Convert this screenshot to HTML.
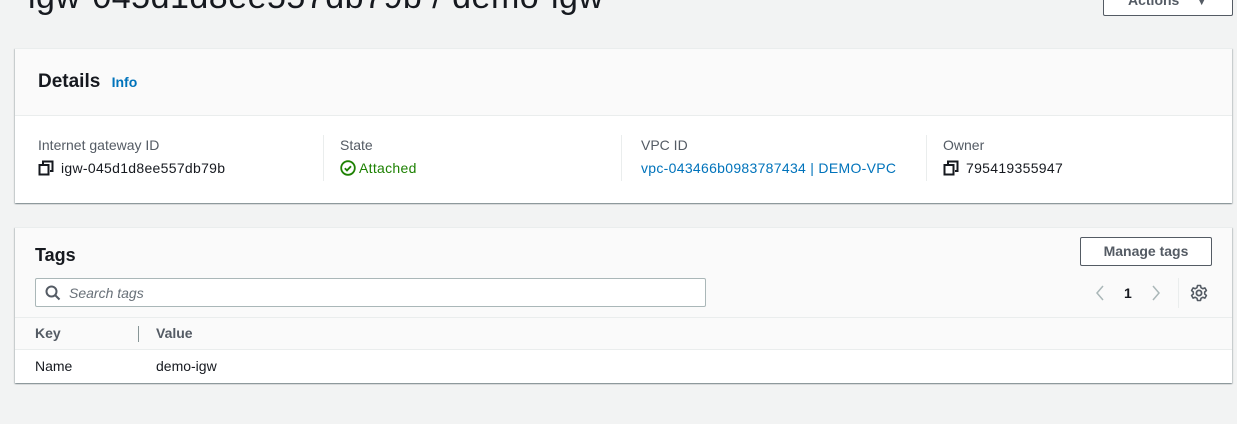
<!DOCTYPE html>
<html><head><style>
*{box-sizing:border-box;margin:0;padding:0}
body{width:1237px;height:424px;overflow:hidden;background:#f2f3f3;font-family:"Liberation Sans",sans-serif;color:#16191f;position:relative;font-size:14px}
.abs{position:absolute}
.card{position:absolute;left:15px;width:1217px;background:#fff;box-shadow:0 1px 1px 0 rgba(0,28,36,.3),1px 1px 1px 0 rgba(0,28,36,.15),-1px 1px 1px 0 rgba(0,28,36,.15);border-top:1px solid #eaeded}
.lbl{color:#545b64;font-size:14px}
.v{letter-spacing:.3px}
.sep{position:absolute;width:1px;background:#eaeded}
</style></head><body>
<div class="abs" style="left:28px;top:-22px;font-size:34px;color:#16191f;white-space:nowrap;letter-spacing:.5px">igw-045d1d8ee557db79b / demo-igw</div>
<div class="abs" style="left:1103px;top:-10px;width:130px;height:26px;border:1px solid #545b64;border-radius:2px;background:#fff;font-weight:bold;color:#545b64;font-size:14px;padding:0 0 0 24px;line-height:18px">Actions <span style="margin-left:14px;font-size:9px">▼</span></div>

<div class="card" style="top:48px;height:155px">
 <div style="height:67px;background:#fafafa;border-bottom:1px solid #eaeded;position:relative">
  <div class="abs" style="left:23px;top:22px;font-size:19px;font-weight:bold">Details <span style="font-size:14px;color:#0073bb;margin-left:6px">Info</span></div>
 </div>
 <div class="sep" style="left:308px;top:86px;height:46px"></div>
 <div class="sep" style="left:606px;top:86px;height:46px"></div>
 <div class="sep" style="left:911px;top:86px;height:46px"></div>
 <div class="abs lbl" style="left:23px;top:88px">Internet gateway ID</div>
 <div class="abs v" style="left:23px;top:111px;color:#16191f">
  <svg width="16" height="16" viewBox="0 0 16 16" style="vertical-align:-3px;margin-right:7px"><rect x="1.5" y="5" width="9" height="9.5" fill="none" stroke="#16191f" stroke-width="2"/><path d="M5 4V1.5h9.5v9.5H12" fill="none" stroke="#16191f" stroke-width="2"/></svg>igw-045d1d8ee557db79b</div>
 <div class="abs lbl" style="left:325px;top:88px">State</div>
 <div class="abs v" style="left:325px;top:111px;color:#1d8102">
  <svg width="16" height="16" viewBox="0 0 16 16" style="vertical-align:-3px;margin-right:3px"><circle cx="8" cy="8" r="6.8" fill="none" stroke="#1d8102" stroke-width="1.8"/><path d="M4.8 8.2l2.2 2.2 4-4.2" fill="none" stroke="#1d8102" stroke-width="1.8"/></svg>Attached</div>
 <div class="abs lbl" style="left:626px;top:88px">VPC ID</div>
 <div class="abs v" style="left:626px;top:111px;color:#0073bb">vpc-043466b0983787434 | DEMO-VPC</div>
 <div class="abs lbl" style="left:928px;top:88px">Owner</div>
 <div class="abs v" style="left:928px;top:111px">
  <svg width="16" height="16" viewBox="0 0 16 16" style="vertical-align:-3px;margin-right:7px"><rect x="1.5" y="5" width="9" height="9.5" fill="none" stroke="#16191f" stroke-width="2"/><path d="M5 4V1.5h9.5v9.5H12" fill="none" stroke="#16191f" stroke-width="2"/></svg>795419355947</div>
</div>

<div class="card" style="top:227px;height:156px">
 <div style="height:90px;background:#fafafa;border-bottom:1px solid #eaeded;position:relative">
  <div class="abs" style="left:20px;top:17px;font-size:18px;font-weight:bold">Tags</div>
  <div class="abs" style="left:1065px;top:9px;width:132px;height:29px;border:1px solid #545b64;border-radius:2px;background:#fff;font-weight:bold;color:#545b64;text-align:center;line-height:27px">Manage tags</div>
  <div class="abs" style="left:20px;top:50px;width:671px;height:29px;border:1px solid #aab7b8;border-radius:2px;background:#fff">
   <svg class="abs" style="left:9px;top:6px" width="16" height="16" viewBox="0 0 16 16"><circle cx="6.5" cy="6.5" r="5" fill="none" stroke="#545b64" stroke-width="2"/><path d="M10 10l4.5 4.5" stroke="#545b64" stroke-width="2"/></svg>
   <span class="abs" style="left:33px;top:6px;color:#687078;font-style:italic">Search tags</span>
  </div>
  <svg class="abs" style="left:1079px;top:56px" width="12" height="18" viewBox="0 0 12 18"><path d="M9 2L3 9l6 7" fill="none" stroke="#aab7b8" stroke-width="1.5"/></svg>
  <div class="abs" style="left:1109px;top:57px;font-weight:bold">1</div>
  <svg class="abs" style="left:1135px;top:56px" width="12" height="18" viewBox="0 0 12 18"><path d="M3 2l6 7-6 7" fill="none" stroke="#aab7b8" stroke-width="1.5"/></svg>
  <div class="sep" style="left:1163px;top:50px;height:30px"></div>
  <svg class="abs" style="left:1175px;top:56px" width="18" height="18" viewBox="0 0 18 18"><circle cx="9" cy="9" r="2.6" fill="none" stroke="#545b64" stroke-width="1.8"/><path d="M7.5 1.5h3l.5 2.2 1.8 1 2.1-.8 1.5 2.6-1.7 1.5v2l1.7 1.5-1.5 2.6-2.1-.8-1.8 1-.5 2.2h-3l-.5-2.2-1.8-1-2.1.8-1.5-2.6 1.7-1.5v-2L1.6 6.5l1.5-2.6 2.1.8 1.8-1z" fill="none" stroke="#545b64" stroke-width="1.6" stroke-linejoin="round"/></svg>
 </div>
 <div style="height:32px;border-bottom:1px solid #eaeded;position:relative;background:#fafafa">
  <div class="abs" style="left:20px;top:7px;font-weight:bold;color:#545b64">Key</div>
  <div class="sep" style="left:123px;top:8px;height:16px;background:#879596"></div>
  <div class="abs" style="left:141px;top:7px;font-weight:bold;color:#545b64">Value</div>
 </div>
 <div class="abs" style="left:20px;top:130px">Name</div>
 <div class="abs" style="left:141px;top:130px">demo-igw</div>
</div>
</body></html>
